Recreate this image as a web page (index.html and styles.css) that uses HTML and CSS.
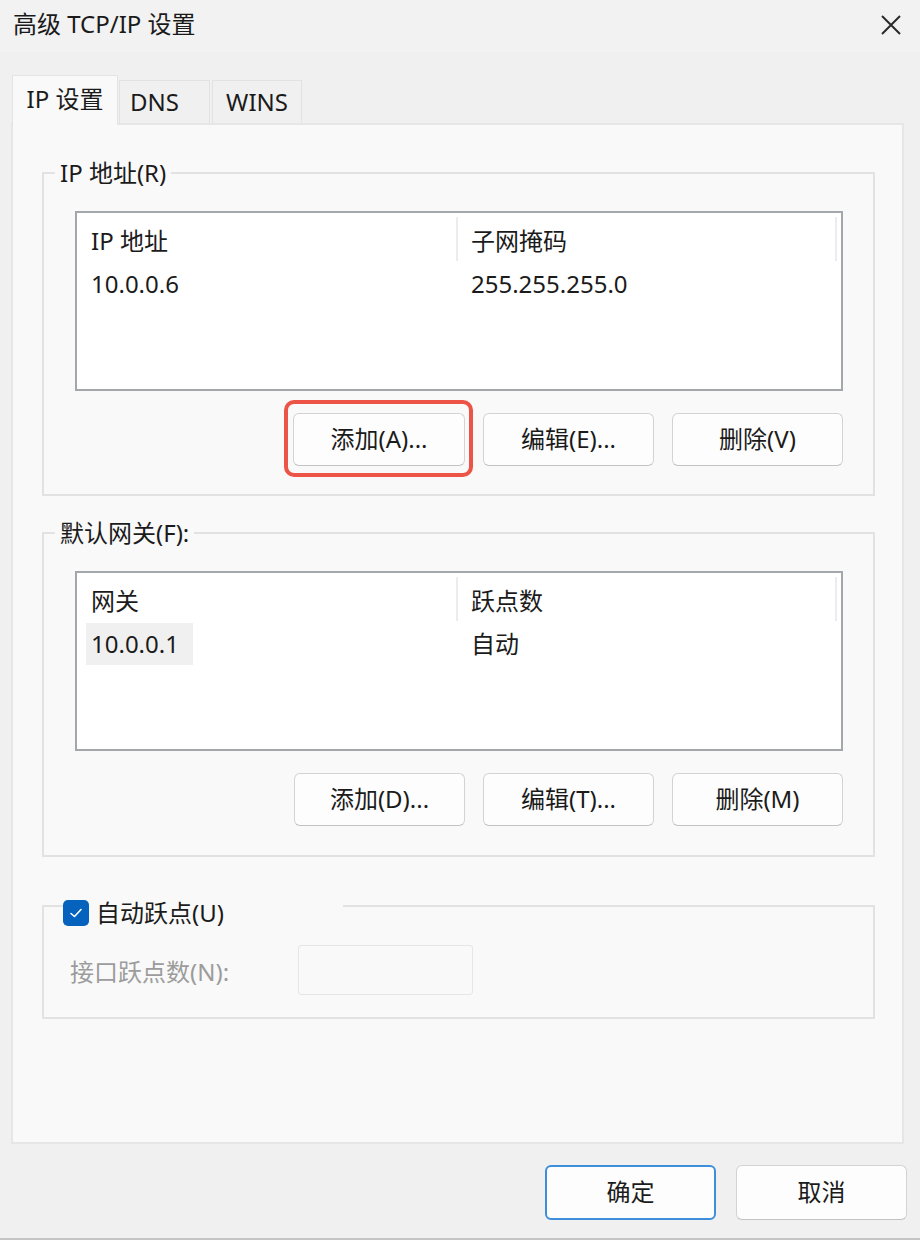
FILE: index.html
```html
<!DOCTYPE html>
<html lang="zh-CN">
<head>
<meta charset="utf-8">
<title>高级 TCP/IP 设置</title>
<link rel="stylesheet" href="styles.css">
</head>
<body>
<div class="window">
  <div class="titlebar">
    <span class="title">高级 TCP/IP 设置</span>
    <svg class="close" width="22" height="22" viewBox="0 0 22 22"><path d="M2 2 L20 20 M20 2 L2 20" stroke="#2b2b2b" stroke-width="2" fill="none"/></svg>
  </div>
  <div class="tabs">
    <div class="tab active">IP 设置</div>
    <div class="tab dns">DNS</div>
    <div class="tab wins">WINS</div>
  </div>
  <div class="panel">
    <fieldset class="group g1">
      <legend class="legend">IP 地址(R)</legend>
      <div class="listbox">
        <div class="lrow head">
          <div class="cell c1">IP 地址</div>
          <div class="cell c2">子网掩码</div>
          <div class="cell c3"></div>
        </div>
        <div class="lrow data">
          <div class="cell c1"><span class="val">10.0.0.6</span></div>
          <div class="cell c2"><span class="val">255.255.255.0</span></div>
        </div>
      </div>
      <div class="btnrow">
        <button class="btn hl">添加(A)...<span class="mark"></span></button>
        <button class="btn">编辑(E)...</button>
        <button class="btn">删除(V)</button>
      </div>
    </fieldset>

    <fieldset class="group g2">
      <legend class="legend">默认网关(F):</legend>
      <div class="listbox">
        <div class="lrow head">
          <div class="cell c1">网关</div>
          <div class="cell c2">跃点数</div>
          <div class="cell c3"></div>
        </div>
        <div class="lrow data">
          <div class="cell c1"><span class="val sel">10.0.0.1</span></div>
          <div class="cell c2"><span class="val">自动</span></div>
        </div>
      </div>
      <div class="btnrow">
        <button class="btn">添加(D)...</button>
        <button class="btn">编辑(T)...</button>
        <button class="btn">删除(M)</button>
      </div>
    </fieldset>

    <fieldset class="group g3">
      <legend class="legend chk">
        <span class="checkbox"><svg width="16" height="16" viewBox="0 0 16 16"><path d="M3 8.5 L6.5 11.5 L13 4.5" stroke="#ffffff" stroke-width="1.6" fill="none" stroke-linecap="round" stroke-linejoin="round"/></svg></span>
        <span class="chklabel">自动跃点(U)</span>
      </legend>
      <div class="metric">
        <span class="mlabel">接口跃点数(N):</span>
        <span class="minput"></span>
      </div>
    </fieldset>
  </div>
  <div class="footer">
    <button class="btn fbtn ok">确定</button>
    <button class="btn fbtn">取消</button>
  </div>
</div>
</body>
</html>
```

FILE: styles.css
```css
* { box-sizing: border-box; }
html, body { margin: 0; padding: 0; }
body {
  width: 920px;
  height: 1240px;
  background: #f0f0f0;
  font-family: "Noto Sans", "Noto Sans CJK SC", sans-serif;
  font-size: 24px;
  color: #1b1b1b;
}
.window {
  width: 920px;
  height: 1240px;
  background: #f0f0f0;
  border-bottom: 2px solid #c4c4c4;
  overflow: hidden;
}
.titlebar {
  height: 52px;
  display: flex;
  align-items: center;
  justify-content: space-between;
  padding: 0 18px 4px 13px;
  background: #f2f2f2;
}
.title { font-size: 24px; line-height: 30px; color: #1a1a1a; }
.close { display: block; margin-top: 2px; }

.tabs {
  margin-top: 23px;
  margin-left: 12px;
  height: 48px;
  display: flex;
  align-items: flex-end;
  position: relative;
  z-index: 1;
}
.tab {
  height: 43px;
  border: 1px solid #e2e2e2;
  border-bottom: none;
  background: #f0f0f0;
  display: flex;
  align-items: center;
  justify-content: center;
  line-height: 1;
  color: #1b1b1b;
}
.tab.active {
  width: 106px;
  height: 50px;
  margin-bottom: -2px;
  background: #f9f9f9;
  border-color: #e4e4e4;
  padding-bottom: 3px;
}
.tab.dns { width: 91px; margin-left: 1px; justify-content: flex-start; padding-left: 10px; }
.tab.wins { width: 90px; margin-left: 2px; }

.panel {
  margin-left: 11px;
  width: 893px;
  height: 1021px;
  background: #f9f9f9;
  border: 2px solid #e6e6e6;
  padding: 31px 27px 0 29px;
}

.group {
  margin: 0;
  padding: 21px 30px 28px 31px;
  border: 2px solid #e2e2e2;
  min-width: 0;
}
.legend {
  margin-left: -20px;
  padding: 0 5px;
  line-height: 34px;
  font-size: 24px;
  color: #1b1b1b;
}
.g2 { margin-top: 20px; padding-bottom: 29px; }
.g3 { margin-top: 25px; padding: 15px 30px 22px 26px; }

.listbox {
  height: 180px;
  background: #ffffff;
  border: 2px solid #a3a7ac;
}
.lrow { display: flex; }
.lrow.head { height: 48px; padding-top: 4px; }
.lrow.head .cell {
  display: flex;
  align-items: center;
  padding-left: 14px;
  flex: none;
}
.lrow.head .c1 { width: 381px; border-right: 2px solid #ececec; }
.lrow.head .c2 { width: 379px; border-right: 2px solid #ececec; padding-left: 13px; }
.lrow.head .c3 { flex: 1 1 auto; padding-left: 0; }
.lrow.data { height: 46px; align-items: center; }
.lrow.data .cell { flex: none; }
.lrow.data .c1 { width: 381px; padding-left: 9px; }
.lrow.data .c2 { width: 381px; padding-left: 8px; }
.val {
  display: inline-block;
  height: 42px;
  line-height: 42px;
  padding: 0 14px 0 5px;
}
.val.sel { background: #f0f0f0; }

.btnrow {
  margin-top: 22px;
  display: flex;
  justify-content: flex-end;
  gap: 18px;
}
.btn {
  position: relative;
  width: 171px;
  height: 53px;
  background: #fdfdfd;
  border: 1px solid #d3d3d3;
  border-bottom-color: #c2c2c2;
  border-radius: 6px;
  font-family: "Noto Sans", "Noto Sans CJK SC", sans-serif;
  font-size: 24px;
  color: #1b1b1b;
  padding: 0 0 2px;
  line-height: 1;
}
.btn.hl { width: 172px; }
.mark {
  position: absolute;
  left: -10px;
  right: -9px;
  top: -14px;
  bottom: -12px;
  border: 4px solid #ec5448;
  border-radius: 10px;
  pointer-events: none;
}

.chk {
  margin-left: -7px;
  width: 280px;
  padding: 14px 0 0 0;
  display: flex;
  align-items: center;
}
.checkbox {
  width: 26px;
  height: 26px;
  border-radius: 5px;
  background: #0562bd;
  display: inline-flex;
  align-items: center;
  justify-content: center;
  flex: none;
}
.checkbox svg { display: block; }
.chklabel { margin-left: 7px; line-height: 34px; }

.metric { display: flex; align-items: center; }
.mlabel { width: 228px; color: #9c9c9c; }
.minput {
  width: 175px;
  height: 50px;
  border: 1px solid #e6e6e6;
  background: #f9f9f9;
  border-radius: 3px;
}

.footer {
  display: flex;
  justify-content: flex-end;
  gap: 20px;
  padding: 21px 13px 0 0;
}
.fbtn { height: 55px; }
.fbtn.ok { border: 2px solid #3d8edb; background: #fdfdfd; }
```
